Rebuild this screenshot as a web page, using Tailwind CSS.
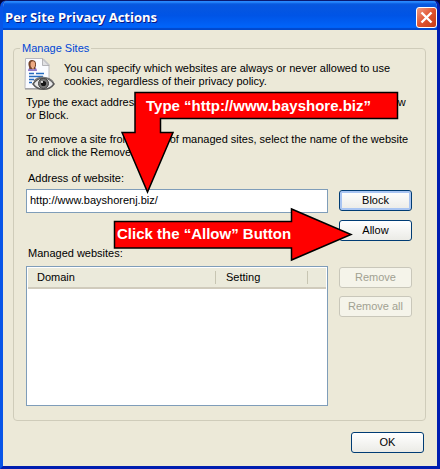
<!DOCTYPE html>
<html lang="en">
<head>
<meta charset="utf-8">
<meta name="viewport" content="width=device-width, initial-scale=1">
<title>Per Site Privacy Actions</title>
<script src="https://cdn.jsdelivr.net/npm/@tailwindcss/browser@4"></script>
</head>
<body class="bg-[#04043a] font-['Liberation_Sans',Arial,sans-serif] text-[11px] leading-[13px] text-black">
<main class="relative flex min-h-screen flex-col overflow-hidden rounded-t-[7px] border-x-3 border-b-3 border-t border-t-[#0a1a70] border-r-[#001db0] border-b-[#001db0] border-l-[#0855e8] bg-[#ece9d8]">
  <header class="-mx-1 flex h-[29px] items-center justify-between bg-linear-to-b from-[#0a58dc] via-[#0054e6] to-[#0068ff] pr-1 pl-[6px] shadow-[inset_0_2px_2px_#2b8cff,inset_0_-2px_1px_#0048cc]">
    <h1 class="pt-[3px] font-['Open_Sans','Noto_Sans',sans-serif] text-[13px] leading-4 font-bold whitespace-nowrap text-white [text-shadow:1px_1px_#0a1883]">Per Site Privacy Actions</h1>
    <button type="button" aria-label="Close" class="mt-1 grid size-[21px] place-items-center rounded-[3px] border border-white bg-linear-to-br from-[#f09a80] via-[#e0532f] to-[#c43c14]">
      <svg viewBox="0 0 13 13" class="size-[13px]" fill="none" stroke="#fff" stroke-width="2.4" aria-hidden="true"><path d="M1.500 1.500l10 10M11.500 1.500l-10 10"/></svg>
    </button>
  </header>

  <fieldset class="mt-[10px] mr-[11px] ml-[10px] rounded-[4px] border border-[#cfccba] pr-[13px] pb-[14px] pl-3">
    <legend class="-ml-[6px] px-[2px] leading-4 text-[#0046d5]">Manage Sites</legend>
    <div class="flex gap-[9px] pt-[2px]">
      <svg viewBox="0 0 31 33" class="-ml-[2px] h-[33px] w-[31px] shrink-0" aria-hidden="true">
        <path d="M1.500 .5H19l6 6V30.500H1z" fill="#fafbff" stroke="#b9b9bd"/>
        <path d="M1 31h20" stroke="#8f8f90"/>
        <path d="M18.500 1v6.500H25z" fill="#e1e1e4" stroke="#a5a5a9" stroke-width=".8"/>
        <path d="M4 13c0-3 2-4 4.500-4s4.500 1 4.500 4z" fill="#9078c4"/>
        <path d="M4.500 7C4 3.500 6 1.800 8.500 2s4 2 3.500 5.500L11 11H5.500z" fill="#754429"/>
        <ellipse cx="8.800" cy="6.500" rx="2.300" ry="3.200" fill="#eda982"/>
        <path d="M7.500 9h2.300l-.5 3z" fill="#f1bd9c"/>
        <path d="M5 15.500h5M12 15.500h8M5 18.500h14M5 21.500h5M5 24.500h3" stroke="#276cc0" stroke-width="1.300"/>
        <path d="M9 26c5-8 16-8 21 0-5 7-16 7-21 0z" fill="#e9e9e9" stroke="#575757" stroke-width="1.500"/>
        <path d="M10 23c5-5 14-5 19 1" fill="none" stroke="#777" stroke-width="1.500"/>
        <circle cx="19.500" cy="25.500" r="5" fill="#777" stroke="#444"/>
        <circle cx="19.500" cy="25.500" r="2.600" fill="#151515"/>
        <circle cx="18" cy="24" r="1" fill="#fff"/>
      </svg>
      <p class="pt-1">You can specify which websites are always or never allowed to use<br>cookies, regardless of their privacy policy.</p>
    </div>
    <p class="mt-[5px] whitespace-nowrap">Type the exact address of the website you want to manage, and click on Allow<br>or Block.</p>
    <p class="mt-[11px] whitespace-nowrap">To remove a site from the list of managed sites, select the name of the website<br>and click the Remove.</p>

    <label for="address" class="mt-[13px] mb-1 ml-[2px] block">Address of website:</label>
    <div class="grid grid-cols-[1fr_73px] gap-x-[11px]">
      <input id="address" type="text" value="http://www.bayshorenj.biz/" class="h-[24px] w-full min-w-0 border border-[#7f9db9] bg-white px-[3px] pb-[2px] outline-none">
      <div class="flex flex-col gap-[9px] pt-px">
        <button type="button" class="h-[21px] rounded-[3px] border border-[#003c74] bg-linear-to-b from-white to-[#ebebe6] shadow-[inset_0_0_0_2px_#a9c5f2]">Block</button>
        <button type="button" class="h-[21px] rounded-[3px] border border-[#003c74] bg-linear-to-b from-white to-[#ebebe6]">Allow</button>
      </div>
    </div>
    <p id="managed" class="mt-[6px] mb-[6px] ml-[2px]">Managed websites:</p>
    <div class="grid grid-cols-[1fr_73px] gap-x-[11px]">
      <div class="h-[140px] border border-[#7f9db9] bg-white p-px">
        <table aria-labelledby="managed" class="w-full table-fixed border-collapse text-left">
          <thead>
            <tr class="h-[20px] border-b-2 border-[#d0cbbc] bg-[#ebeadb]">
              <th scope="col" class="pl-[9px] font-normal"><span class="block border-r border-[#c7c5b2]">Domain</span></th>
              <th scope="col" class="w-[92px] pl-[10px] font-normal"><span class="block border-r border-[#c7c5b2]">Setting</span></th>
              <td class="w-[18px]"></td>
            </tr>
          </thead>
          <tbody></tbody>
        </table>
      </div>
      <div class="flex flex-col gap-2 pt-px">
        <button type="button" disabled class="h-[21px] rounded-[3px] border border-[#c9c7ba] bg-[#f5f4ea] text-[#a1a192]">Remove</button>
        <button type="button" disabled class="h-[21px] rounded-[3px] border border-[#c9c7ba] bg-[#f5f4ea] text-[#a1a192]">Remove all</button>
      </div>
    </div>
  </fieldset>

  <div class="mt-[11px] mr-[13px] flex justify-end">
    <button type="button" class="h-[21px] w-[73px] rounded-[3px] border border-[#003c74] bg-linear-to-b from-white to-[#ebebe6]">OK</button>
  </div>

  <aside class="absolute top-[90px] left-[118px] h-[103px] w-[278px]">
    <svg viewBox="0 0 278 103" class="absolute inset-0 size-full" aria-hidden="true"><path d="M14 1.500H276.500V27.500H39.500V41.500H52L26.500 101 1 41.500H14z" fill="#f00" stroke="#000" stroke-width="1.500"/></svg>
    <p class="relative pt-[6px] pl-[25px] text-[15px] leading-[17px] font-bold whitespace-nowrap text-white">Type “http://www.bayshore.biz”</p>
  </aside>
  <aside class="absolute top-[206px] right-[84px] h-[55px] w-[240px]">
    <svg viewBox="0 0 240 55" class="absolute inset-0 size-full" aria-hidden="true"><path d="M1.500 14.500H178.500V2L238 27.500 178.500 53V41H1.500z" fill="#f00" stroke="#000" stroke-width="1.500"/></svg>
    <p class="relative pt-[18px] pl-1 text-[15px] leading-[17px] font-bold whitespace-nowrap text-white">Click the “Allow” Button</p>
  </aside>
</main>
</body>
</html>
